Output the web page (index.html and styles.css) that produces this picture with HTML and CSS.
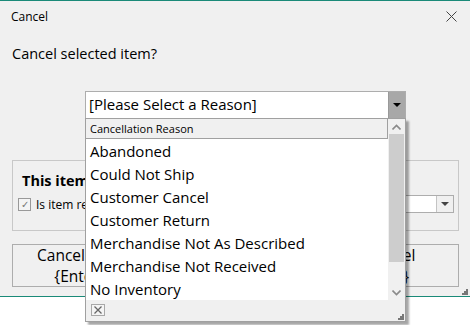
FILE: index.html
```html
<!DOCTYPE html>
<html lang="en">

<head>
  <meta charset="UTF-8">
  <title>Cancel</title>
  <link rel="stylesheet" href="styles.css">
</head>

<body>
  <div class="window">
    <div class="titlebar">
      <span class="title">Cancel</span>
      <svg class="close" width="11" height="11" viewBox="0 0 11 11"><path d="M0.5 0.5L10.5 10.5M10.5 0.5L0.5 10.5" stroke="#444" stroke-width="1" fill="none"/></svg>
    </div>

    <p class="prompt">Cancel selected item?</p>

    <div class="reason-row">
      <div class="combo big">
        <span class="combo-text">[Please Select a Reason]</span>
        <span class="combo-btn dark"><i class="tri"></i></span>
      </div>
    </div>

    <fieldset class="group">
      <div class="group-title">This item</div>
      <div class="group-row">
        <label class="check"><span class="box">&#10003;</span>Is item res</label>
        <div class="combo small">
          <span class="combo-text"></span>
          <span class="combo-btn"><i class="tri"></i></span>
        </div>
      </div>
    </fieldset>

    <div class="buttons">
      <button class="btn">Cancel Item<br>{Enter}</button>
      <button class="btn">Cancel<br>{Esc}</button>
    </div>

    <span class="grip"></span>
  </div>

  <!-- dropdown list of the reason combo, open -->
  <div class="popup">
    <div class="popup-body">
      <div class="popup-main">
        <div class="popup-head">Cancellation Reason</div>
        <ul class="reasons">
          <li>Abandoned</li>
          <li>Could Not Ship</li>
          <li>Customer Cancel</li>
          <li>Customer Return</li>
          <li>Merchandise Not As Described</li>
          <li>Merchandise Not Received</li>
          <li>No Inventory</li>
        </ul>
      </div>
      <div class="scrollbar">
        <span class="arrow"><svg width="9" height="6" viewBox="0 0 9 6"><path d="M0.5 5.5L4.5 1.5L8.5 5.5" stroke="#8a8a8a" stroke-width="1.6" fill="none"/></svg></span>
        <span class="thumb"></span>
        <span class="track"></span>
        <span class="arrow"><svg width="9" height="6" viewBox="0 0 9 6"><path d="M0.5 0.5L4.5 4.5L8.5 0.5" stroke="#8a8a8a" stroke-width="1.6" fill="none"/></svg></span>
      </div>
    </div>
    <div class="popup-foot">
      <span class="clear-btn"><svg width="8" height="8" viewBox="0 0 8 8"><path d="M0.5 0.5L7.5 7.5M7.5 0.5L0.5 7.5" stroke="#666" stroke-width="1.3" fill="none"/></svg></span>
      <span class="grip small-grip"></span>
    </div>
  </div>
</body>

</html>
```

FILE: styles.css
```css
html,
body {
  height: 325px;
  overflow: hidden;
}

body {
  margin: 0;
  background-color: #fff;
  font-family: 'Open Sans', 'Noto Sans', sans-serif;
  color: #000;
  position: relative;
}

.window {
  position: relative;
  height: 295px;
  background-color: #f0f0f0;
  border-top: 1px solid #1a8a78;
  border-bottom: 1px solid #1a8a78;
}

.titlebar {
  display: flex;
  align-items: center;
  justify-content: space-between;
  height: 30px;
  padding: 0 13px 0 11px;
}

.title {
  font-size: 12px;
}

.prompt {
  margin: 13px 0 0 12px;
  font-size: 14.5px;
  line-height: 20px;
}

.reason-row {
  margin-top: 27px;
  padding-left: 85px;
}

.combo {
  display: flex;
  background-color: #fff;
  border: 1px solid #adadad;
  box-sizing: border-box;
}

.combo.big {
  width: 321px;
  height: 28px;
}

.combo-text {
  flex: 1;
  padding-left: 3px;
  font-size: 15px;
  line-height: 25px;
  white-space: nowrap;
}

.combo-btn {
  width: 16px;
  display: flex;
  align-items: center;
  justify-content: center;
  border-left: 1px solid #c4c4c4;
  background-color: #f0f0f0;
}

.combo-btn.dark {
  background-color: #a8a8a8;
  border-left: 1px solid #999;
}

.tri {
  width: 0;
  height: 0;
  border-left: 4px solid transparent;
  border-right: 4px solid transparent;
  border-top: 4px solid #222;
}

.combo-btn .tri {
  border-top-color: #444;
}

.combo-btn.dark .tri {
  border-top-color: #000;
}

.group {
  margin: 41px 11px 0 12px;
  height: 71px;
  box-sizing: border-box;
  border: 1px solid #c8c8c8;
  padding: 10px 4px 0 5px;
}

.group-title {
  font-size: 14.5px;
  font-weight: bold;
  line-height: 20px;
  padding-left: 4px;
}

.group-row {
  display: flex;
  align-items: center;
  justify-content: space-between;
  margin-top: 4px;
}

.check {
  display: flex;
  align-items: center;
  gap: 5px;
  font-size: 12px;
}

.box {
  width: 11px;
  height: 11px;
  border: 1px solid #999;
  background-color: #f4f4f4;
  font-size: 10px;
  line-height: 11px;
  text-align: center;
  color: #777;
}

.combo.small {
  width: 100px;
  height: 18px;
}

.buttons {
  display: flex;
  justify-content: space-between;
  margin: 13px 11px 0 12px;
}

.btn {
  width: 135px;
  height: 43px;
  padding: 0;
  background-color: #f0f0f0;
  border: 1px solid #adadad;
  font-family: inherit;
  font-size: 15.5px;
  line-height: 21px;
  color: #000;
}

.grip {
  position: absolute;
  right: 2px;
  bottom: 1px;
  width: 6px;
  height: 6px;
  background:
    linear-gradient(#777, #777) 4px 0 / 2px 2px no-repeat,
    linear-gradient(#777, #777) 2px 2px / 2px 2px no-repeat,
    linear-gradient(#777, #777) 4px 2px / 2px 2px no-repeat,
    linear-gradient(#777, #777) 0 4px / 2px 2px no-repeat,
    linear-gradient(#777, #777) 2px 4px / 2px 2px no-repeat,
    linear-gradient(#777, #777) 4px 4px / 2px 2px no-repeat;
}

.popup {
  position: absolute;
  left: 85px;
  top: 118px;
  width: 321px;
  height: 204px;
  box-sizing: border-box;
  border: 1px solid #a0a0a0;
  background-color: #f0f0f0;
  box-shadow: 3px 3px 2px rgba(0, 0, 0, 0.35);
  display: flex;
  flex-direction: column;
}

.popup-body {
  display: flex;
  height: 181px;
  flex-shrink: 0;
}

.popup-main {
  flex: 1;
  background-color: #fff;
  overflow: hidden;
}

.popup-head {
  height: 19px;
  background-color: #f0f0f0;
  border-bottom: 1px solid #a0a0a0;
  border-right: 1px solid #a0a0a0;
  font-size: 11px;
  line-height: 19px;
  padding-left: 4px;
}

.reasons {
  list-style-type: none;
  margin: 0;
  padding: 1px 0 0 4px;
}

.reasons li {
  font-size: 15px;
  line-height: 23px;
  white-space: nowrap;
}

.scrollbar {
  width: 17px;
  display: flex;
  flex-direction: column;
  background-color: #f0f0f0;
}

.arrow {
  height: 15px;
  display: flex;
  align-items: center;
  justify-content: center;
}

.thumb {
  height: 128px;
  margin: 0 1px;
  background-color: #cdcdcd;
}

.track {
  flex: 1;
}

.popup-foot {
  flex: 1;
  position: relative;
  padding: 4px 5px;
}

.clear-btn {
  width: 14px;
  height: 12px;
  box-sizing: border-box;
  border: 1px solid #a8a8a8;
  background-color: #f4f4f4;
  display: flex;
  align-items: center;
  justify-content: center;
}

.small-grip {
  right: 1px;
  bottom: 1px;
}
```
